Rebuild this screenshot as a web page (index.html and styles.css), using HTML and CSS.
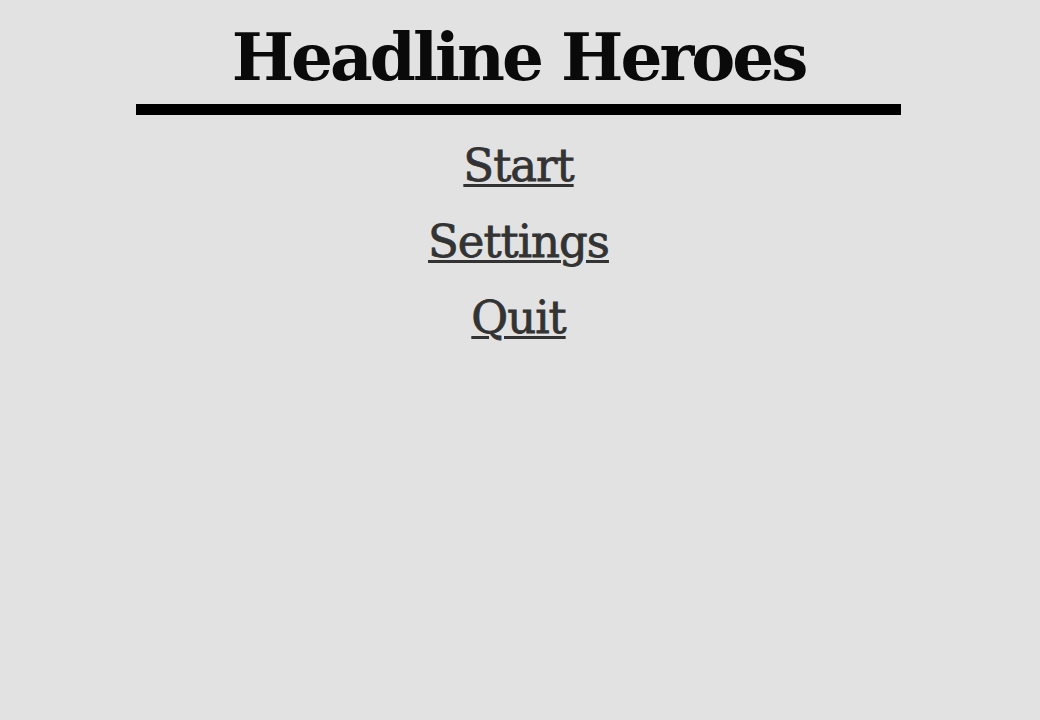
FILE: index.html
```html
<!DOCTYPE html>
<html>
<head>
<meta charset="utf-8">
<link rel="stylesheet" href="styles.css">
</head>
<body>
<div class="page">
  <header class="masthead">
    <h1 class="title">Headline Heroes</h1>
  </header>
  <nav class="menu">
    <a class="menu-item" href="#">Start</a>
    <a class="menu-item" href="#">Settings</a>
    <a class="menu-item" href="#">Quit</a>
  </nav>
</div>
</body>
</html>
```
FILE: styles.css
```css
html, body {
  margin: 0;
  padding: 0;
  background: #e2e2e2;
}
body {
  font-family: "DejaVu Serif", "Liberation Serif", serif;
}
.page {
  width: 1037px;
  height: 720px;
  display: flex;
  flex-direction: column;
  align-items: center;
}
.masthead {
  width: 765px;
  border-bottom: 11px solid #000;
  display: flex;
  justify-content: center;
  padding-top: 22px;
  padding-bottom: 12px;
}
.title {
  margin: 0;
  font-size: 66px;
  font-weight: bold;
  line-height: 70px;
  color: #0a0a0a;
  letter-spacing: -3px;
}
.menu {
  display: flex;
  flex-direction: column;
  align-items: center;
  gap: 16px;
  padding-top: 21px;
}
.menu-item {
  font-size: 45px;
  font-weight: normal;
  line-height: 60px;
  color: #333;
  letter-spacing: -1px;
  -webkit-text-stroke: 0.8px #333;
  text-decoration: underline;
  text-decoration-thickness: 3px;
  text-underline-offset: 3px;
}
```
